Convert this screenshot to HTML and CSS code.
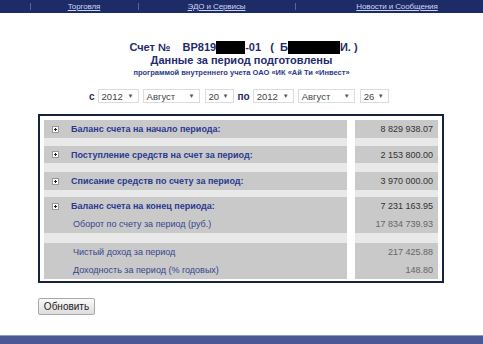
FILE: index.html
```html
<!DOCTYPE html>
<html lang="ru">
<head>
  <meta charset="UTF-8" />
  <title>Счет</title>
  <link rel="stylesheet" href="styles.css">
</head>
<body>
  <div class="topnav">
    <span class="cell c1"><a href="#">Торговля</a></span>
    <span class="cell c2"><a href="#">ЭДО и Сервисы</a></span>
    <span class="cell c3"><a href="#">Новости и Сообщения</a></span>
  </div>

  <div class="head">
    <div class="acct">Счет №&nbsp;&nbsp;&nbsp; BP819<span class="mask m1"></span>-01&nbsp;&nbsp; (&nbsp; Б<span class="mask m2"></span>И. )</div>
    <div class="ready">Данные за период подготовлены</div>
    <div class="prog">программой внутреннего учета ОАО «ИК «Ай Ти «Инвест»</div>
  </div>

  <div class="period">
    <b class="word">с</b>
    <span class="sel w-year">2012<i>▼</i></span>
    <span class="sel w-month">Август<i>▼</i></span>
    <span class="sel w-day">20<i>▼</i></span>
    <b class="word">по</b>
    <span class="sel w-year">2012<i>▼</i></span>
    <span class="sel w-month">Август<i>▼</i></span>
    <span class="sel w-day">26<i>▼</i></span>
  </div>

  <div class="sheet">
    <div class="lbl h18"><svg class="plus" width="7" height="7" viewBox="0 0 7 7"><rect x="0.5" y="0.5" width="6" height="6" fill="#fff" stroke="#999"/><path d="M2 3.5h3M3.5 2v3" stroke="#222"/></svg><b>Баланс счета на начало периода:</b></div>
    <div class="val h18"><span class="main">8 829 938.07</span></div>
    <div class="gap g8"></div><div class="gap g8"></div>

    <div class="lbl h17"><svg class="plus" width="7" height="7" viewBox="0 0 7 7"><rect x="0.5" y="0.5" width="6" height="6" fill="#fff" stroke="#999"/><path d="M2 3.5h3M3.5 2v3" stroke="#222"/></svg><b>Поступление средств на счет за период:</b></div>
    <div class="val h17"><span class="main">2 153 800.00</span></div>
    <div class="gap g9"></div><div class="gap g9"></div>

    <div class="lbl h18"><svg class="plus" width="7" height="7" viewBox="0 0 7 7"><rect x="0.5" y="0.5" width="6" height="6" fill="#fff" stroke="#999"/><path d="M2 3.5h3M3.5 2v3" stroke="#222"/></svg><b>Списание средств по счету за период:</b></div>
    <div class="val h18"><span class="main">3 970 000.00</span></div>
    <div class="gap g7"></div><div class="gap g7"></div>

    <div class="lbl multi">
      <div class="line"><svg class="plus" width="7" height="7" viewBox="0 0 7 7"><rect x="0.5" y="0.5" width="6" height="6" fill="#fff" stroke="#999"/><path d="M2 3.5h3M3.5 2v3" stroke="#222"/></svg><b>Баланс счета на конец периода:</b></div>
      <div class="line sub">Оборот по счету за период (руб.)</div>
    </div>
    <div class="val multi">
      <div class="line main">7 231 163.95</div>
      <div class="line minor">17 834 739.93</div>
    </div>
    <div class="gap g10"></div><div class="gap g10"></div>

    <div class="lbl multi">
      <div class="line sub">Чистый доход за период</div>
      <div class="line sub">Доходность за период (% годовых)</div>
    </div>
    <div class="val multi">
      <div class="line minor">217 425.88</div>
      <div class="line minor">148.80</div>
    </div>
  </div>

  <div class="actions">
    <button class="btn">Обновить</button>
  </div>

  <div class="footer"></div>
</body>
</html>
```

FILE: styles.css
```css
* { box-sizing:border-box; margin:0; padding:0 }
html, body {
  height:100%; background:#fff; color:#222;
  font-family:"Liberation Sans", Arial, sans-serif;
}
body { overflow:hidden }

/* top menu */
.topnav {
  display:flex; height:13px; padding-left:30px;
  background:#1d2c66; font-size:8px; line-height:13px;
}
.topnav .cell {
  flex-shrink:0; text-align:center; position:relative;
}
.topnav .cell::before {
  content:""; position:absolute; left:0; top:3px;
  width:1px; height:7px; background:#56669c;
}
.c1 { width:108px }
.c2 { width:157px }
.c3 { width:204px }
.topnav a { color:#cfd6f2; text-decoration:underline; letter-spacing:-0.1px }

/* heading */
.head { margin-top:28px; text-align:center; color:#1f2b6b; font-weight:bold }
.acct { font-size:11px; line-height:13px; padding-left:4px }
.mask { display:inline-block; background:#000; height:13px; vertical-align:-3px }
.m1 { width:29px }
.m2 { width:52px }
.ready { font-size:11px; line-height:13px }
.prog { font-size:7.5px; line-height:12px; color:#2a3a8a }

/* period selectors */
.period {
  display:flex; align-items:center; margin-top:10px; padding-left:89px;
  height:14px; font-size:10px;
}
.word { color:#1f2b6b; margin-right:3px; font-size:10px }
.sel {
  display:flex; align-items:center; justify-content:space-between;
  height:14px; padding:0 4px 0 3px; margin-right:4px;
  border:1px solid #dcdcdc; background:#fff; color:#444; font-size:9.5px;
}
.sel i { font-style:normal; font-size:6px; color:#555 }
.w-year { width:41px }
.w-month { width:57px; margin-right:5px }
.w-day { width:29px }

/* balance sheet */
.sheet {
  display:grid; grid-template-columns:303px 83px; column-gap:8px;
  margin:11px 0 0 38px; width:406px;
  padding:4px 4px 2px; border:2px solid #17233f;
}
.lbl, .val { background:#c9c9c9; font-size:9px }
.h18 { height:18px }
.h17 { height:17px }
.lbl { display:flex; align-items:center; padding-left:8px; color:#2a3990 }
.lbl .plus { margin-right:12px; flex-shrink:0 }
.val { display:flex; align-items:center; justify-content:flex-end; padding-right:5px }
.lbl.multi, .val.multi { display:block; height:36px }
.line { height:18px; line-height:18px; display:flex; align-items:center }
.val .line { justify-content:flex-end }
.sub { padding-left:21px; color:#39448c }
.main { color:#333 }
.minor { color:#666 }
.gap { background:#e9e9e9 }
.g7 { height:7px }
.g8 { height:8px }
.g9 { height:9px }
.g10 { height:10px }

/* refresh */
.actions { margin:13px 0 0 38px }
.btn {
  width:57px; height:17px; font:10px "Liberation Sans", Arial, sans-serif; color:#222;
  border:1px solid #a9a9a9; border-radius:2px;
  background:linear-gradient(#fafafa, #dcdcdc);
}

.footer {
  margin-top:20px; height:11px;
  background:#4a5996; border-top:1px solid #8d98c4;
}
```
